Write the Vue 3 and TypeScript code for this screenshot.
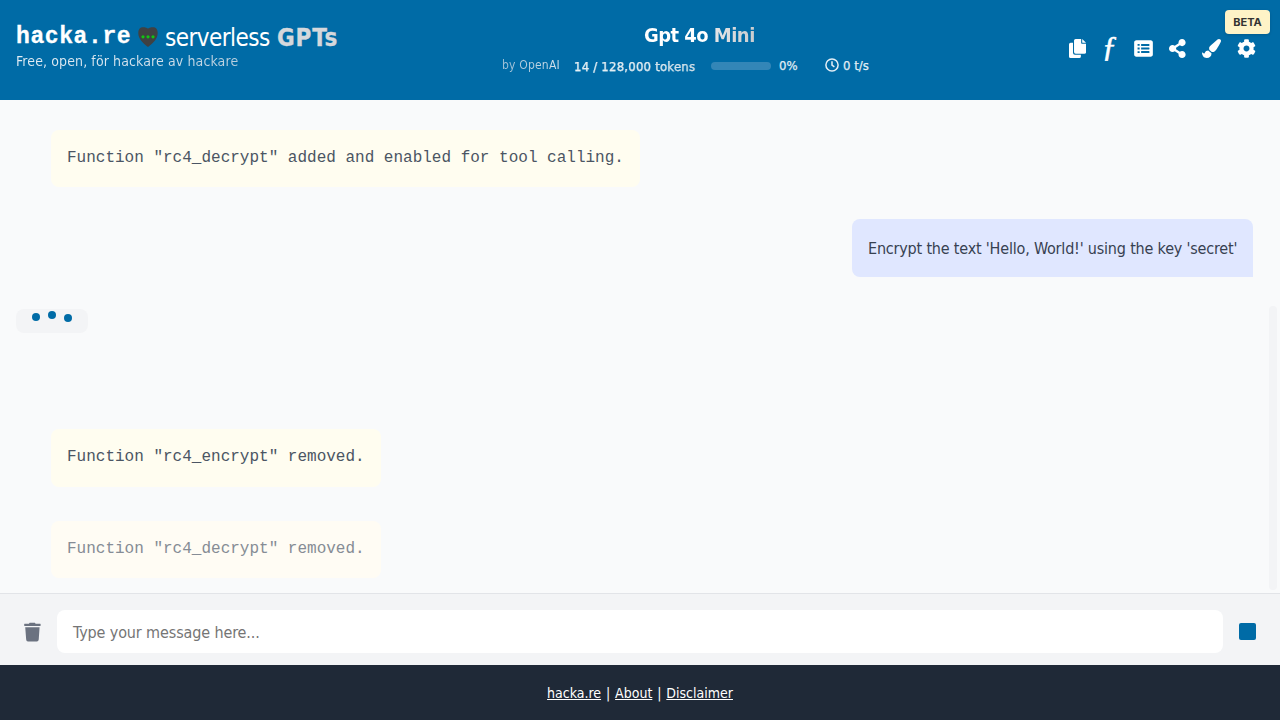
<script setup lang="ts">
interface IconDef {
  name: string
  box: string
  path: string
}

interface Message {
  kind: 'system' | 'user'
  text: string
  className?: string
}

const toolIcons: IconDef[] = [
  {
    name: 'copy',
    box: '0 0 18 20',
    path: 'M7 0H12.800V4.200Q12.800 5 13.600 5H18V13.800Q18 15.500 16.300 15.500H7Q5.300 15.500 5.300 13.800V1.700Q5.300 0 7 0ZM13.900 0L18 4H14.500Q13.900 4 13.900 3.400ZM1.700 4H4.200V14.500Q4.200 16.600 6.300 16.600H12.500V18.300Q12.500 20 10.800 20H1.700Q0 20 0 18.300V5.700Q0 4 1.700 4Z',
  },
  { name: 'function', box: '', path: '' },
  {
    name: 'list',
    box: '0 0 512 512',
    path: 'M448 480H64c-35 0-60-25-60-60V92c0-35 25-60 60-60h384c35 0 60 25 60 60v328c0 35-25 60-60 60zM96 136v48h56v-48zM96 232v48h56v-48zM96 328v48h56v-48zM416 176v-32c0-6.627-5.373-12-12-12H192v56h212c6.627 0 12-5.373 12-12zm0 96v-32c0-6.627-5.373-12-12-12H192v56h212c6.627 0 12-5.373 12-12zm0 96v-32c0-6.627-5.373-12-12-12H192v56h212c6.627 0 12-5.373 12-12z',
  },
  {
    name: 'share',
    box: '0 0 448 512',
    path: 'M352 320c-22.608 0-43.387 7.819-59.79 20.895l-102.486-64.054a96.551 96.551 0 0 0 0-41.683l102.486-64.054C308.613 184.181 329.392 192 352 192c53.019 0 96-42.981 96-96S405.019 0 352 0s-96 42.981-96 96c0 7.158.79 14.13 2.276 20.841L155.79 180.895C139.387 167.819 118.608 160 96 160c-53.019 0-96 42.981-96 96s42.981 96 96 96c22.608 0 43.387-7.819 59.79-20.895l102.486 64.054A96.301 96.301 0 0 0 256 416c0 53.019 42.981 96 96 96s96-42.981 96-96-42.981-96-96-96z',
  },
  {
    name: 'brush',
    box: '0 0 512 512',
    path: 'M167.02 309.34c-40.12 2.58-76.53 17.86-97.19 72.3-2.35 6.21-8 9.98-14.59 9.98-11.11 0-45.46-27.67-55.25-34.35C0 439.62 37.93 512 128 512c75.86 0 128-43.77 128-120.19 0-3.11-.65-6.08-.97-9.13l-88.01-73.34zM457.89 0c-15.16 0-29.37 6.71-40.21 16.45C213.27 199.05 192 203.34 192 257.09c0 13.7 3.25 26.76 8.73 38.7l63.82 53.18c7.21 1.8 14.64 3.03 22.39 3.03 62.11 0 98.11-45.47 211.16-256.46 7.38-14.35 13.9-29.85 13.9-45.99C512 20.64 486 0 457.89 0z',
  },
  {
    name: 'gear',
    box: '0 0 512 512',
    path: 'M487.4 315.7l-42.6-24.6c4.3-23.2 4.3-47 0-70.2l42.6-24.6c4.9-2.8 7.1-8.6 5.5-14-11.1-35.6-30-67.8-54.7-94.6-3.8-4.1-10-5.1-14.8-2.3L380.8 110c-17.9-15.4-38.5-27.3-60.8-35.1V25.8c0-5.6-3.9-10.5-9.4-11.7-36.7-8.2-74.3-7.8-109.2 0-5.5 1.2-9.4 6.1-9.4 11.7V75c-22.2 7.9-42.8 19.8-60.8 35.1L88.7 85.5c-4.9-2.8-11-1.9-14.8 2.3-24.7 26.7-43.6 58.9-54.7 94.6-1.7 5.4.6 11.2 5.5 14L67.3 221c-4.3 23.2-4.3 47 0 70.2l-42.6 24.6c-4.9 2.8-7.1 8.6-5.5 14 11.1 35.6 30 67.8 54.7 94.6 3.8 4.1 10 5.1 14.8 2.3l42.6-24.6c17.9 15.4 38.5 27.3 60.8 35.1v49.2c0 5.6 3.9 10.5 9.4 11.7 36.7 8.2 74.3 7.8 109.2 0 5.5-1.2 9.4-6.1 9.4-11.7v-49.2c22.2-7.9 42.8-19.8 60.8-35.1l42.6 24.6c4.9 2.8 11 1.9 14.8-2.3 24.7-26.7 43.6-58.9 54.7-94.6 1.5-5.5-.7-11.3-5.6-14.1zM256 336c-44.1 0-80-35.9-80-80s35.9-80 80-80 80 35.9 80 80-35.9 80-80 80z',
  },
]

const earlier: Message[] = [
  { kind: 'system', text: 'Function "rc4_decrypt" added and enabled for tool calling.' },
  { kind: 'user', text: "Encrypt the text 'Hello, World!' using the key 'secret'" },
]

const later: Message[] = [
  { kind: 'system', text: 'Function "rc4_encrypt" removed.', className: 'settled' },
  { kind: 'system', text: 'Function "rc4_decrypt" removed.', className: 'entering' },
]
</script>

<template>
  <div class="app">
    <header class="header">
      <div class="brand">
        <h1 class="title">
          <span class="logo">hacka.re</span>
          <svg class="heart" viewBox="0 0 20 20">
            <path d="M10 20C7 17.5 0 12.500 .3 6C.4 2 2.300.3 5 .3C7.500.3 9 .8 10 1.800C11 .8 12.500.3 15 .3C17.700.3 19.600 2 19.700 6C20 12.500 13 17.500 10 20Z" fill="#3f4142" />
            <circle cx="5" cy="9.800" r="1.600" fill="#12c512" />
            <circle cx="10" cy="9.800" r="1.600" fill="#12c512" />
            <circle cx="15" cy="9.800" r="1.600" fill="#12c512" />
          </svg>
          <span class="serverless">serverless</span>
          <span class="gpts">GPTs</span>
        </h1>
        <p class="tagline">Free, open, för hackare av hackare</p>
      </div>

      <div class="model">
        <div class="model-name">Gpt 4o Mini</div>
        <div class="stats">
          <span class="provider">by OpenAI</span>
          <span class="tokens"><span>14 / 128,000 tokens</span></span>
          <span class="meter"></span>
          <span class="percent">0%</span>
          <svg class="clock" viewBox="0 0 14 14">
            <circle cx="7" cy="7" r="6.100" />
            <path d="M7 3.300V7.200L9.400 8.900" />
          </svg>
          <span class="speed">0 t/s</span>
        </div>
      </div>

      <nav class="tools">
        <span v-for="icon in toolIcons" :key="icon.name" class="tool" :class="icon.name">
          <span v-if="icon.name === 'function'" class="fn">ƒ</span>
          <svg v-else :viewBox="icon.box"><path fill-rule="evenodd" :d="icon.path" /></svg>
        </span>
      </nav>
      <span class="beta">BETA</span>
    </header>

    <main class="chat">
      <div v-for="m in earlier" :key="m.text" class="message" :class="m.kind"><span>{{ m.text }}</span></div>
      <div class="typing"><i></i><i></i><i></i></div>
      <div v-for="m in later" :key="m.text" class="message" :class="[m.kind, m.className]"><span>{{ m.text }}</span></div>
      <div class="scrollbar"></div>
    </main>

    <form class="composer">
      <svg class="trash" viewBox="0 0 18 20">
        <path d="M.6 1.200H5.200L6 .2H11.500L12.300 1.200H17.200Q17.600 1.200 17.600 2V3.200Q17.600 3.700 17.200 3.700H.6Q.2 3.700.2 3.200V2Q.2 1.200.6 1.200Z" />
        <path d="M1.300 5H16.500L15.600 18Q15.400 20 13.600 20H4.200Q2.400 20 2.300 18Z" />
      </svg>
      <div class="field"><span>Type your message here...</span></div>
      <span class="stop"></span>
    </form>

    <footer class="footer">
      <a>hacka.re</a><b>|</b><a>About</a><b>|</b><a>Disclaimer</a>
    </footer>
  </div>
</template>

<style>
html,
body {
  margin: 0;
  overflow: hidden;
}
</style>

<style scoped>
.app {
  width: 1280px;
  height: 720px;
  display: flex;
  flex-direction: column;
  overflow: hidden;
  background: #f9fafb;
  font-family: "DejaVu Sans Condensed", "DejaVu Sans", sans-serif;
  font-stretch: condensed;
  color: #374151;
}
.app * {
  box-sizing: border-box;
  white-space: nowrap;
}
.header {
  position: relative;
  flex: 0 0 100px;
  display: grid;
  grid-template-columns: 486px 1fr 228px;
  padding: 0 0 0 16px;
  background: #006ba6;
  color: #fff;
}
.brand {
  padding-top: 22px;
}
.title {
  margin: 0;
  height: 30px;
  display: flex;
  align-items: center;
  font-size: 24px;
  font-weight: 400;
  line-height: 30px;
}
.logo {
  width: 122px;
  font-family: "Liberation Mono", monospace;
  font-size: 23px;
  font-weight: 700;
  letter-spacing: 0.6px;
  -webkit-text-stroke: 0.3px #fff;
}
.heart {
  width: 20px;
  height: 20px;
  flex: none;
}
.serverless {
  width: 112px;
  margin-left: 7px;
  padding-top: 1px;
  letter-spacing: -0.55px;
}
.gpts {
  padding-top: 1px;
  font-weight: 700;
  letter-spacing: 0.8px;
  color: #d5d8dc;
  -webkit-text-stroke: 0.3px #d5d8dc;
}
.tagline {
  margin: 0;
  width: max-content;
  font-size: 14px;
  line-height: 19px;
  letter-spacing: 0.11px;
  background: linear-gradient(90deg, #e4eef5 0, #d5e3ed 60%, #b9cfde 100%);
  background-clip: text;
  color: transparent;
}
.model-name {
  margin: 23px 0 0 142px;
  width: max-content;
  font-size: 20px;
  font-weight: 700;
  line-height: 24px;
  letter-spacing: -0.54px;
  background: linear-gradient(90deg, #fff 0, #fff 58%, #e3e4e6 65%, #c9cccf 100%);
  background-clip: text;
  color: transparent;
}
.stats {
  display: flex;
  align-items: center;
  height: 20px;
  margin-top: 9px;
  font-size: 13px;
  color: #e5eff6;
}
.provider {
  width: 72px;
  margin-top: -2px;
  font-size: 12px;
  letter-spacing: 0.2px;
  background: linear-gradient(90deg, #9fc0d6 0, #b0cbdd 35%, #d9e6ee 80%);
  background-clip: text;
  color: transparent;
}
.tokens {
  width: 137px;
  letter-spacing: 0.22px;
}
.tokens span {
  background: linear-gradient(90deg, #e9f2f7 0, #dfeaf1 65%, #c3d5e1 100%);
  background-clip: text;
  color: transparent;
}
.tokens,
.percent,
.speed {
  -webkit-text-stroke: 0.25px #dfeaf1;
}
.percent,
.clock,
.speed {
  margin-top: -2px;
}
.meter {
  width: 60px;
  height: 8px;
  border-radius: 4px;
  background: #3386b7;
}
.percent {
  width: 46px;
  margin-left: 8px;
}
.clock {
  width: 14px;
  height: 14px;
  margin-right: 4px;
  fill: none;
  stroke: #e5eff6;
  stroke-width: 1.500;
}
.tools {
  display: grid;
  grid-template-columns: 32px 33px 35px 33px 35px 35px;
  align-items: center;
  height: 97px;
  margin-left: 9px;
}
.tool {
  display: flex;
  justify-content: center;
}
.tool svg {
  height: 19px;
  fill: #fff;
}
.copy {
  padding-left: 1px;
}
.fn {
  margin-top: -5px;
  font-family: "Liberation Serif", serif;
  font-size: 30px;
  font-style: italic;
  line-height: 30px;
  -webkit-text-stroke: 0.6px #fff;
}
.beta {
  position: absolute;
  top: 10px;
  right: 10px;
  width: 45px;
  height: 24px;
  border-radius: 4px;
  background: #fef3c7;
  box-shadow: 0 1px 3px rgba(0, 0, 0, 0.15);
  color: #333;
  font-family: Inter, "Open Sans", sans-serif;
  font-size: 11px;
  font-weight: 700;
  line-height: 24px;
  text-align: center;
}
.chat {
  position: relative;
  flex: 1;
  display: flex;
  flex-direction: column;
  align-items: flex-start;
  gap: 32px;
  padding-top: 30px;
}
.message {
  height: 58px;
  padding: 0 16px;
  border-radius: 8px;
  font-size: 16px;
  line-height: 59px;
}
.system {
  height: 57px;
  margin-left: 51px;
  background: #fffdf0;
  font-family: "Liberation Mono", monospace;
  line-height: 57px;
  color: #4b5563;
}
.user {
  align-self: flex-end;
  width: 401px;
  margin-right: 27px;
  border-bottom-right-radius: 0;
  background: #e0e7ff;
  letter-spacing: -0.19px;
}
.settled {
  height: 58px;
}
.entering {
  margin-top: 2px;
  background: #fffcf4;
  color: #868c95;
}
.typing {
  display: flex;
  gap: 8px;
  width: 72px;
  height: 24px;
  margin: 0 0 64px 16px;
  padding: 4px 16px;
  border-radius: 8px;
  background: #f3f4f6;
}
.typing i {
  width: 8px;
  height: 8px;
  border-radius: 50%;
  background: #006ba6;
}
.typing i:nth-child(2) {
  margin-top: -2px;
}
.typing i:nth-child(3) {
  margin-top: 1px;
}
.scrollbar {
  position: absolute;
  right: 3px;
  top: 206px;
  width: 8px;
  height: 284px;
  border-radius: 4px;
  background: #f3f4f6;
}
.composer {
  flex: 0 0 72px;
  display: flex;
  align-items: flex-start;
  margin: 0;
  padding: 16px 24px 0;
  border-top: 1px solid #e2e4e8;
  background: #f3f4f6;
}
.trash {
  width: 17px;
  height: 20px;
  margin: 12px 16px 0 0;
  fill: #6b7280;
}
.field {
  width: 1166px;
  height: 43px;
  padding-left: 16px;
  border-radius: 8px;
  background: #fff;
  color: #757575;
  font-size: 16px;
  line-height: 45px;
  letter-spacing: -0.12px;
}
.stop {
  width: 17px;
  height: 17px;
  margin: 13px 0 0 16px;
  border-radius: 2px;
  background: #006ba6;
}
.footer {
  flex: 0 0 55px;
  display: flex;
  justify-content: center;
  padding-top: 1px;
  background: #1f2937;
  color: #fff;
  font-size: 14px;
  line-height: 54px;
}
.footer a {
  text-decoration: underline;
}
.footer b {
  width: 14px;
  font-weight: 400;
  text-align: center;
}
</style>
